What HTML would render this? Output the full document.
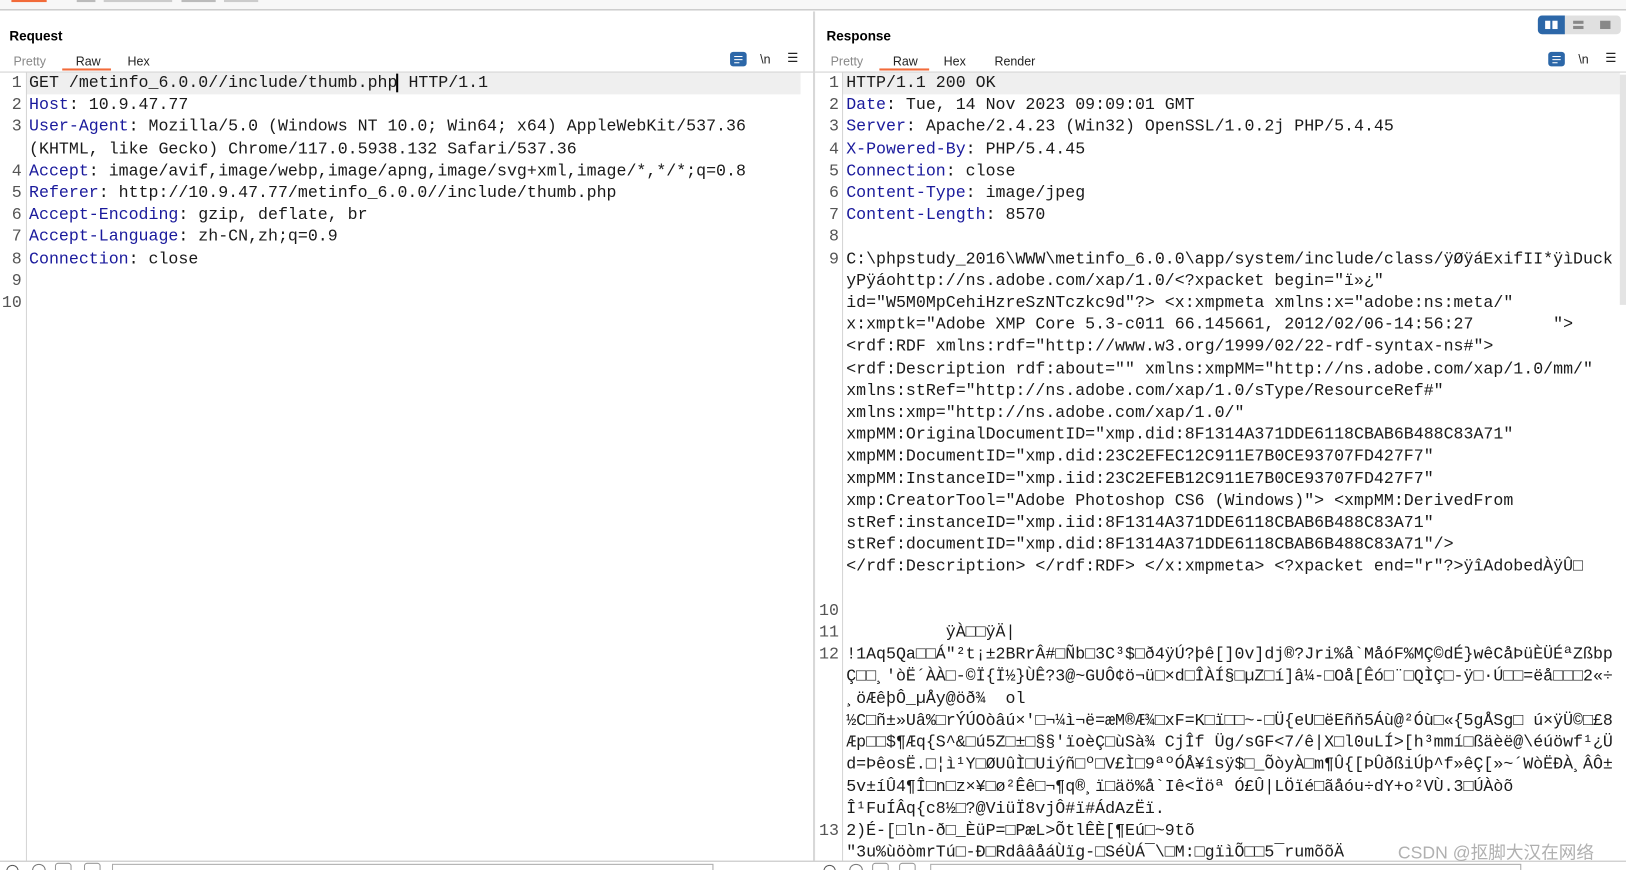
<!DOCTYPE html>
<html><head><meta charset="utf-8"><style>
*{margin:0;padding:0;box-sizing:border-box}
body{width:1626px;height:870px;overflow:hidden;background:#fff;font-family:"Liberation Sans",sans-serif;position:relative}
#c{position:absolute;left:0;top:0;width:1568px;height:839px;transform:scale(1.037);transform-origin:0 0;overflow:hidden}
.abs{position:absolute}
.top{left:0;top:0;width:1568px;height:10px;background:#f7f7f7;border-bottom:1px solid #b8b8b8}
.ttl{font-weight:bold;font-size:13px;color:#000;top:27px}
.tab{font-size:12px;top:52px;color:#222}
.tab.dim{color:#888}
.ul{height:2px;background:#f26b3a;top:66px}
.hline{height:1px;background:#d0d0d0}
.vline{width:1px;background:#d4d4d4}
.code{font-family:"Liberation Mono",monospace;font-size:16px;line-height:21.2px;white-space:pre;color:#1a1a1a}
.ln{font-family:"Liberation Mono",monospace;font-size:16px;line-height:21.2px;color:#555;text-align:right;white-space:pre}
.k{color:#1a1a9c}
.ic{font-size:12px;color:#222}
.wrap{width:16px;height:14px;background:#2c67a8;border-radius:3px}
.wrap i{position:absolute;left:4px;height:1px;background:#fff;width:8px}
</style></head><body><div id="c">
<div class="abs top"></div>
<div class="abs" style="left:11px;top:0;width:34px;height:2px;background:#f26b3a"></div>
<div class="abs" style="left:74px;top:0;width:18px;height:2px;background:#bbb"></div>
<div class="abs" style="left:100px;top:0;width:66px;height:2px;background:#ccc"></div>
<div class="abs" style="left:175px;top:0;width:33px;height:2px;background:#bbb"></div>
<div class="abs" style="left:216px;top:0;width:33px;height:2px;background:#ccc"></div>

<div class="abs" style="left:784px;top:11px;width:2px;height:819px;background:#d8d8d8"></div>

<div class="abs ttl" style="left:9px">Request</div>
<div class="abs tab dim" style="left:13px">Pretty</div>
<div class="abs tab" style="left:73px">Raw</div>
<div class="abs tab" style="left:123px">Hex</div>
<div class="abs ul" style="left:60px;width:47px"></div>
<div class="abs wrap" style="left:704px;top:50px"><i style="top:4px"></i><i style="top:7px"></i><i style="top:10px;width:5px"></i></div>
<div class="abs ic" style="left:733px;top:50px">\n</div>
<div class="abs ic" style="left:759px;top:49px">☰</div>
<div class="abs hline" style="left:0;top:69px;width:784px"></div>
<div class="abs" style="left:26px;top:70px;width:746px;height:21px;background:#efefef"></div>
<div class="abs vline" style="left:25px;top:70px;height:760px"></div>
<div class="abs ln" style="left:0;top:70px;width:21px">1
2
3

4
5
6
7
8
9
10</div>
<div class="abs code" style="left:28px;top:70px">GET /metinfo_6.0.0//include/thumb.php<span style="border-left:2px solid #000;margin-left:-1px"></span> HTTP/1.1
<span class="k">Host</span>: 10.9.47.77
<span class="k">User-Agent</span>: Mozilla/5.0 (Windows NT 10.0; Win64; x64) AppleWebKit/537.36
(KHTML, like Gecko) Chrome/117.0.5938.132 Safari/537.36
<span class="k">Accept</span>: image/avif,image/webp,image/apng,image/svg+xml,image/*,*/*;q=0.8
<span class="k">Referer</span>: http://10.9.47.77/metinfo_6.0.0//include/thumb.php
<span class="k">Accept-Encoding</span>: gzip, deflate, br
<span class="k">Accept-Language</span>: zh-CN,zh;q=0.9
<span class="k">Connection</span>: close</div>

<div class="abs ttl" style="left:797px">Response</div>
<div class="abs tab dim" style="left:801px">Pretty</div>
<div class="abs tab" style="left:861px">Raw</div>
<div class="abs tab" style="left:910px">Hex</div>
<div class="abs tab" style="left:959px">Render</div>
<div class="abs ul" style="left:848px;width:48px"></div>
<div class="abs" style="left:1483px;top:15px;width:80px;height:18px;background:#e0e0e0;border-radius:4px"></div>
<div class="abs" style="left:1483px;top:15px;width:26px;height:18px;background:#2c67a8;border-radius:4px 0 0 4px"></div>
<div class="abs" style="left:1490px;top:20px;width:5px;height:8px;background:#fff"></div>
<div class="abs" style="left:1497px;top:20px;width:5px;height:8px;background:#fff"></div>
<div class="abs" style="left:1517px;top:20px;width:10px;height:3px;background:#888"></div>
<div class="abs" style="left:1517px;top:25px;width:10px;height:3px;background:#888"></div>
<div class="abs" style="left:1543px;top:20px;width:10px;height:8px;background:#888"></div>
<div class="abs wrap" style="left:1493px;top:50px"><i style="top:4px"></i><i style="top:7px"></i><i style="top:10px;width:5px"></i></div>
<div class="abs ic" style="left:1522px;top:50px">\n</div>
<div class="abs ic" style="left:1548px;top:49px">☰</div>
<div class="abs hline" style="left:786px;top:69px;width:782px"></div>
<div class="abs" style="left:813px;top:70px;width:749px;height:21px;background:#efefef"></div>
<div class="abs" style="left:1562px;top:72px;width:6px;height:222px;background:#e4e4e4"></div>
<div class="abs vline" style="left:812px;top:70px;height:760px"></div>
<div class="abs ln" style="left:786px;top:70px;width:23px">1
2
3
4
5
6
7
8
9















10
11
12







13</div>
<div class="abs code" style="left:816px;top:70px;width:746px;height:760px;overflow:hidden">HTTP/1.1 200 OK
<span class="k">Date</span>: Tue, 14 Nov 2023 09:09:01 GMT
<span class="k">Server</span>: Apache/2.4.23 (Win32) OpenSSL/1.0.2j PHP/5.4.45
<span class="k">X-Powered-By</span>: PHP/5.4.45
<span class="k">Connection</span>: close
<span class="k">Content-Type</span>: image/jpeg
<span class="k">Content-Length</span>: 8570

C:\phpstudy_2016\WWW\metinfo_6.0.0\app/system/include/class/ÿØÿáExifII*ÿìDuck
yPÿáohttp://ns.adobe.com/xap/1.0/&lt;?xpacket begin="ï»¿"
id="W5M0MpCehiHzreSzNTczkc9d"?&gt; &lt;x:xmpmeta xmlns:x="adobe:ns:meta/"
x:xmptk="Adobe XMP Core 5.3-c011 66.145661, 2012/02/06-14:56:27        "&gt;
&lt;rdf:RDF xmlns:rdf="http://www.w3.org/1999/02/22-rdf-syntax-ns#"&gt;
&lt;rdf:Description rdf:about="" xmlns:xmpMM="http://ns.adobe.com/xap/1.0/mm/"
xmlns:stRef="http://ns.adobe.com/xap/1.0/sType/ResourceRef#"
xmlns:xmp="http://ns.adobe.com/xap/1.0/"
xmpMM:OriginalDocumentID="xmp.did:8F1314A371DDE6118CBAB6B488C83A71"
xmpMM:DocumentID="xmp.did:23C2EFEC12C911E7B0CE93707FD427F7"
xmpMM:InstanceID="xmp.iid:23C2EFEB12C911E7B0CE93707FD427F7"
xmp:CreatorTool="Adobe Photoshop CS6 (Windows)"&gt; &lt;xmpMM:DerivedFrom
stRef:instanceID="xmp.iid:8F1314A371DDE6118CBAB6B488C83A71"
stRef:documentID="xmp.did:8F1314A371DDE6118CBAB6B488C83A71"/&gt;
&lt;/rdf:Description&gt; &lt;/rdf:RDF&gt; &lt;/x:xmpmeta&gt; &lt;?xpacket end="r"?&gt;ÿîAdobedÀÿÛ□


          ÿÀ□□ÿÄ|
!1Aq5Qa□□Á"²t¡±2BRrÂ#□Ñb□3C³$□ð4ÿÚ?þê[]0v]dj®?Jri%å`MåóF%MÇ©dÉ}wêCåÞüÈÜÉªZßbp
Ç□□¸'òË´ÀÀ□-©Ï{Ï½}ÙÊ?3@~GUÔ¢ö¬ü□×d□ÎÀÍ§□µZ□í]â¼-□Oå[Êó□¨□QÌÇ□-ÿ□·Ú□□=ëå□□□2«÷
¸öÆêþÔ_µÅy@öð¾  ol
½C□ñ±»Uâ%□rÝÚOòâú×'□¬¼ì¬ë=æM®Æ¾□xF=K□ï□□~-□Ü{eU□ëEñň5Áù@²Óù□«{5gÅSg□ ú×ÿÜ©□£8
Æp□□$¶Æq{S^&□ú5Z□±□§§'ïoèÇ□ùSà¾ CjÎf Üg/sGF&lt;7/ê|X□l0uLÍ&gt;[h³mmí□ßäèë@\éúöwf¹¿Ü
d=ÞêosË.□¦ì¹Y□ØUûÌ□Uiýñ□º□V£Ì□9ªºÓÅ¥îsÿ$□_ÕòyÀ□m¶Û{[ÞÛðßiÚþ^f»êÇ[»~´WòËÐÀ¸ÂÔ±
5v±íÛ4¶Î□n□z×¥□ø²Êê□¬¶q®¸ï□äö%å`Iê&lt;Ïöª Ó£Û|LÖïé□ãåóu÷dY+o²VÙ.3□ÚÀòõ
Î¹FuÍÂq{c8½□?@ViüÏ8vjÔ#ï#ÁdAzËï.
2)É-[□ln-ð□_ÈüP=□PæL&gt;ÕtlÊÈ[¶Eú□~9tõ
"3u%ùöòmrTú□-Ð□RdââåáÙïg-□SéÙÁ¯\□M:□gïìÕ□□5¯rumõõÄ</div>

<div class="abs" style="left:0;top:830px;width:1568px;height:1px;background:#b8b8b8"></div>
<div class="abs" style="left:0;top:831px;width:1568px;height:10px;background:#fff"></div>
<div class="abs" style="left:6px;top:834px;width:12px;height:12px;border:1px solid #555;border-radius:50%"></div>
<div class="abs" style="left:31px;top:833px;width:13px;height:12px;border:1px solid #777;border-radius:50%"></div>
<div class="abs" style="left:53px;top:832px;width:16px;height:12px;border:1px solid #999;border-radius:3px"></div>
<div class="abs" style="left:81px;top:832px;width:16px;height:12px;border:1px solid #999;border-radius:3px"></div>
<div class="abs" style="left:108px;top:833px;width:580px;height:10px;border:1px solid #aaa"></div>
<div class="abs" style="left:794px;top:834px;width:12px;height:12px;border:1px solid #555;border-radius:50%"></div>
<div class="abs" style="left:819px;top:833px;width:13px;height:12px;border:1px solid #777;border-radius:50%"></div>
<div class="abs" style="left:841px;top:832px;width:16px;height:12px;border:1px solid #999;border-radius:3px"></div>
<div class="abs" style="left:867px;top:832px;width:16px;height:12px;border:1px solid #999;border-radius:3px"></div>
<div class="abs" style="left:897px;top:833px;width:570px;height:10px;border:1px solid #aaa"></div>
<div class="abs" style="left:1348px;top:808px;font-size:17px;color:#b0b0b0;font-family:'Liberation Sans','Noto Sans CJK SC',sans-serif">CSDN @抠脚大汉在网络</div>
</div></body></html>
